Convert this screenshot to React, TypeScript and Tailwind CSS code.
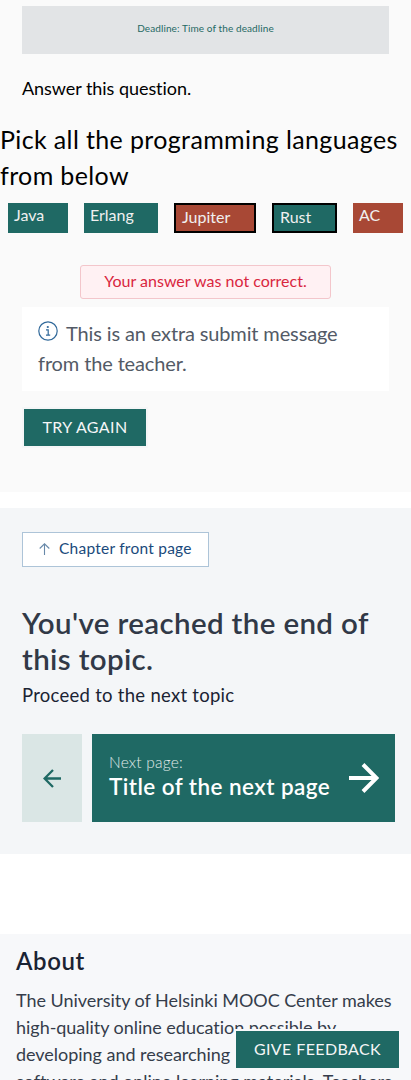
import React from "react";

type Option = { label: string; className: string };

const options: Option[] = [
  { label: "Java", className: "w-[60px] bg-[#1f6964] pl-1.5 leading-[24px]" },
  { label: "Erlang", className: "w-[74px] bg-[#1f6964] pl-1.5 leading-[24px]" },
  { label: "Jupiter", className: "w-[82px] bg-[#a84835] border-2 border-black pl-1.5 leading-[24px]" },
  { label: "Rust", className: "w-[65px] bg-[#1f6964] border-2 border-black pl-1.5 leading-[24px]" },
  { label: "AC", className: "w-[50px] bg-[#a84835] pl-1.5 leading-[24px]" },
];

function InfoIcon() {
  return (
    <svg className="mr-2 inline-block align-baseline" width="20" height="20" viewBox="0 0 20 20" fill="none">
      <circle cx="10" cy="10" r="9.2" stroke="#31699a" strokeWidth="1.2" />
      <circle cx="9.8" cy="6" r="1.1" fill="#31699a" />
      <path d="M8 8.8h2.2v5.2M8 14.1h4.2" stroke="#31699a" strokeWidth="1.2" />
    </svg>
  );
}

function Exercise() {
  return (
    <section className="h-[492px] bg-[#fafafa] pt-1.5">
      <div className="mx-[22px] h-12 bg-[#e2e4e6] pt-[15px] text-center text-[10px] leading-[15px] tracking-[0.1px] text-[#1f6964]">
        Deadline: Time of the deadline
      </div>
      <p className="mx-[22px] mt-5 text-[18px] leading-[29px] tracking-[-0.05px] text-black">Answer this question.</p>
      <h2 className="mt-[18px] whitespace-nowrap text-[25px] font-normal leading-9 tracking-[0.37px] text-black">
        Pick all the programming languages
        <br />
        from below
      </h2>
      <div className="mt-2.5 flex justify-between px-2">
        {options.map((o) => (
          <div key={o.label} className={`h-[30px] text-[16px] text-[#f0f0f0] ${o.className}`}>
            {o.label}
          </div>
        ))}
      </div>
      <div className="mx-auto mt-8 h-[34px] w-[251px] rounded-[3px] border border-[#f3c6cb] bg-[#fff1f3] text-center text-[16px] leading-[30px] text-[#d9263e]">
        Your answer was not correct.
      </div>
      <p className="mx-[22px] mt-2 h-[84px] bg-white px-4 pt-[11px] text-[20px] leading-[30px] tracking-[-0.13px] text-[#535a66]">
        <InfoIcon />
        This is an extra submit message from the teacher.
      </p>
      <button className="ml-[22px] mt-4 block h-[41px] w-[126px] border-2 border-[#f5f6f7] bg-[#1f6964] pb-0.5 text-[16px] leading-[35px] tracking-[0.4px] text-[#f5f6f7]">
        TRY AGAIN
      </button>
    </section>
  );
}

function NextTopic() {
  return (
    <section className="mt-4 h-[346px] bg-[#f4f6f8] pl-[22px] pr-4 pt-6">
      <a className="flex h-[35px] w-[187px] items-center border border-[#adc4d8] bg-white pb-0.5 pl-4 text-[15.5px] tracking-[0.24px] text-[#1a4a7c]">
        <svg className="mr-[9px]" width="11" height="12" viewBox="0 0 11 12" fill="none" stroke="#6889a9" strokeWidth="1.1">
          <path d="M5.5 12V1M.7 5.5 5.5.8l4.8 4.7" />
        </svg>
        Chapter front page
      </a>
      <h2 className="mt-[38px] whitespace-nowrap text-[29.5px] font-semibold leading-9 tracking-[0.36px] text-[#313947]">
        You've reached the end of
        <br />
        this topic.
      </h2>
      <p className="mt-1 text-[18.5px] leading-[29px] tracking-[0.27px] text-[#1a2333]">Proceed to the next topic</p>
      <div className="mt-6 flex h-[88px] gap-2.5">
        <a className="flex w-[60px] items-center justify-center bg-[#dae6e5]">
          <svg width="18" height="19" viewBox="0 0 18 19" fill="none" stroke="#1f6964" strokeWidth="2.3">
            <path d="M18 9.5H1.5M10 1 1.6 9.5 10 18" />
          </svg>
        </a>
        <a className="flex w-[303px] items-center justify-between bg-[#1f6964] pl-[17px] pr-4">
          <div className="-mt-1 whitespace-nowrap">
            <div className="text-[15.5px] font-light leading-[22px] tracking-[0.2px] text-[#e0ebea]">Next page:</div>
            <div className="text-[22.5px] font-semibold leading-7 tracking-[0.44px] text-white">Title of the next page</div>
          </div>
          <svg width="30" height="30" viewBox="0 0 30 30" fill="none" stroke="white" strokeWidth="4">
            <path d="M0 15h28M14 1.5 27.5 15 14 28.5" />
          </svg>
        </a>
      </div>
    </section>
  );
}

export default function App() {
  return (
    <main className="relative h-[1080px] w-[411px] overflow-hidden bg-white font-[Lato,sans-serif] [font-variant-ligatures:none]">
      <Exercise />
      <NextTopic />
      <footer className="mt-20 h-[146px] overflow-hidden bg-[#f7f8fa] px-4 pt-[11px]">
        <h2 className="text-[24px] font-semibold leading-8 tracking-[0.6px] text-[#1a2333]">About</h2>
        <p className="mt-2.5 whitespace-nowrap text-[18px] leading-[27px] tracking-[-0.03px] text-[#353d4b]">
          The University of Helsinki MOOC Center makes
          <br />
          high-quality online education possible by
          <br />
          developing and researching educational
          <br />
          software and online learning materials. Teachers
        </p>
      </footer>
      <button className="absolute left-[234px] top-[1029px] h-[41px] w-[167px] border-2 border-[#f7f8fa] bg-[#1f6964] pb-0.5 text-[16px] leading-[35px] tracking-[0.4px] text-[#f5f6f7]">
        GIVE FEEDBACK
      </button>
    </main>
  );
}
